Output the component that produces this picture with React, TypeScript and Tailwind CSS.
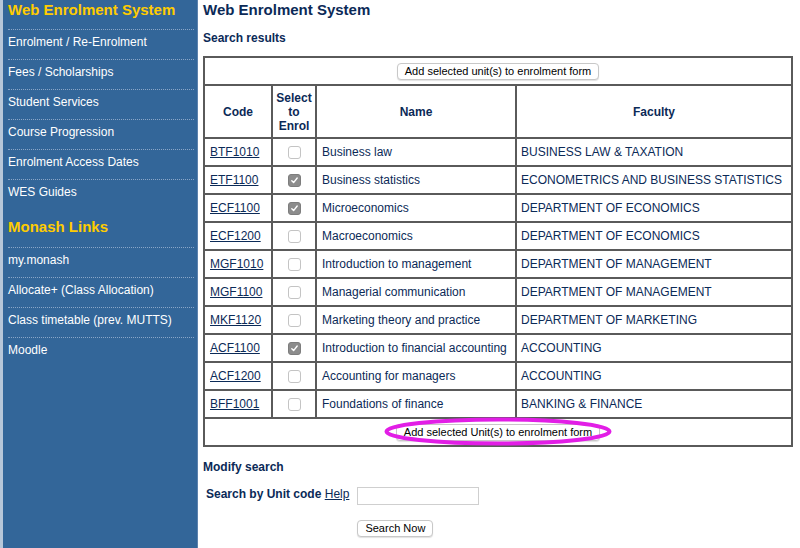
import React from "react";

const navy = "text-[#0b2a57]";

const rows: { code: string; checked: boolean; name: string; faculty: string }[] = [
  { code: "BTF1010", checked: false, name: "Business law", faculty: "BUSINESS LAW & TAXATION" },
  { code: "ETF1100", checked: true, name: "Business statistics", faculty: "ECONOMETRICS AND BUSINESS STATISTICS" },
  { code: "ECF1100", checked: true, name: "Microeconomics", faculty: "DEPARTMENT OF ECONOMICS" },
  { code: "ECF1200", checked: false, name: "Macroeconomics", faculty: "DEPARTMENT OF ECONOMICS" },
  { code: "MGF1010", checked: false, name: "Introduction to management", faculty: "DEPARTMENT OF MANAGEMENT" },
  { code: "MGF1100", checked: false, name: "Managerial communication", faculty: "DEPARTMENT OF MANAGEMENT" },
  { code: "MKF1120", checked: false, name: "Marketing theory and practice", faculty: "DEPARTMENT OF MARKETING" },
  { code: "ACF1100", checked: true, name: "Introduction to financial accounting", faculty: "ACCOUNTING" },
  { code: "ACF1200", checked: false, name: "Accounting for managers", faculty: "ACCOUNTING" },
  { code: "BFF1001", checked: false, name: "Foundations of finance", faculty: "BANKING & FINANCE" },
];

function Checkbox({ checked }: { checked: boolean }) {
  if (checked) {
    return (
      <span className="inline-flex h-[13px] w-[13px] items-center justify-center rounded-[3px] border border-[#7d7d7d] bg-[#8c8c8c] align-middle">
        <svg width="9" height="9" viewBox="0 0 9 9">
          <path d="M1.8 4.8 L3.6 6.6 L7.2 2" fill="none" stroke="#ffffff" strokeWidth="1.4" strokeLinecap="round" strokeLinejoin="round" />
        </svg>
      </span>
    );
  }
  return (
    <span className="inline-block h-[13px] w-[13px] rounded-[3px] border border-[#c4c4c4] bg-white align-middle" />
  );
}

function MacButton({ children }: { children: React.ReactNode }) {
  return (
    <span className="inline-flex h-[17px] items-center rounded-[4px] border border-[#c8c8c8] bg-white px-[7px] text-[11px] leading-none text-black shadow-[0_1px_1px_rgba(0,0,0,0.12)]">
      {children}
    </span>
  );
}

const sideItems1 = [
  "Enrolment / Re-Enrolment",
  "Fees / Scholarships",
  "Student Services",
  "Course Progression",
  "Enrolment Access Dates",
  "WES Guides",
];
const sideItems2 = ["my.monash", "Allocate+ (Class Allocation)", "Class timetable (prev. MUTTS)", "Moodle"];

const cell = "border-2 border-[#5a5a5a]";

export default function App() {
  return (
    <div
      className="flex h-[548px] w-[800px] overflow-hidden bg-white"
      style={{ fontFamily: '"Liberation Sans", Arial, Helvetica, sans-serif' }}
    >
      {/* Sidebar */}
      <div className="h-full w-[3px] bg-[#b7c7d9]" />
      <aside className="h-full w-[195px] border-r border-[#5d82ad] bg-[#336699] pl-[5px] pr-[3px]">
        <div className="pb-[9px] text-[15px] font-bold leading-[20px] text-[#ffcc00]">Web Enrolment System</div>
        {sideItems1.map((t) => (
          <div
            key={t}
            className="border-t border-dotted border-[#8aa6c8] pb-[9px] pt-[4px] text-[12px] leading-[16px] text-white"
          >
            {t}
          </div>
        ))}
        <div className="mt-[8px] pb-[10px] text-[15px] font-bold leading-[20px] text-[#ffcc00]">Monash Links</div>
        {sideItems2.map((t) => (
          <div
            key={t}
            className="border-t border-dotted border-[#8aa6c8] pb-[9px] pt-[4px] text-[12px] leading-[16px] text-white"
          >
            {t}
          </div>
        ))}
      </aside>

      {/* Main */}
      <main className={`ml-[5px] flex-1 ${navy}`}>
        <h1 className="text-[15px] font-bold leading-[20px]">Web Enrolment System</h1>
        <h2 className="mt-[10px] text-[12px] font-bold leading-[16px]">Search results</h2>

        <table className="mt-[10px] w-[588px] table-fixed border-collapse text-[12px]">
          <colgroup>
            <col className="w-[68px]" />
            <col className="w-[44px]" />
            <col className="w-[200px]" />
            <col className="w-[276px]" />
          </colgroup>
          <tbody>
            <tr className="h-[28px]">
              <td colSpan={4} className={`${cell} text-center`}>
                <MacButton>Add selected unit(s) to enrolment form</MacButton>
              </td>
            </tr>
            <tr className="h-[53px] font-bold leading-[14px]">
              <td className={`${cell} text-center`}>Code</td>
              <td className={`${cell} text-center`}>
                Select
                <br />
                to
                <br />
                Enrol
              </td>
              <td className={`${cell} text-center`}>Name</td>
              <td className={`${cell} text-center`}>Faculty</td>
            </tr>
            {rows.map((r) => (
              <tr key={r.code} className="h-[28px] leading-[16px]">
                <td className={`${cell} px-[5px]`}>
                  <span className="underline">{r.code}</span>
                </td>
                <td className={`${cell} text-center`}>
                  <Checkbox checked={r.checked} />
                </td>
                <td className={`${cell} whitespace-nowrap px-[5px]`}>{r.name}</td>
                <td className={`${cell} whitespace-nowrap px-[4px]`}>{r.faculty}</td>
              </tr>
            ))}
            <tr className="h-[28px]">
              <td colSpan={4} className={`${cell} text-center`}>
                <span className="relative inline-block">
                  <MacButton>Add selected Unit(s) to enrolment form</MacButton>
                  <svg
                    className="pointer-events-none absolute left-1/2 top-1/2 -translate-x-1/2 -translate-y-1/2"
                    width="229"
                    height="30"
                    viewBox="0 0 229 30"
                  >
                    <ellipse cx="114.5" cy="14.5" rx="111.5" ry="12" fill="none" stroke="#e21ee6" strokeWidth="4" />
                  </svg>
                </span>
              </td>
            </tr>
          </tbody>
        </table>

        <h2 className="mt-[12px] text-[12px] font-bold leading-[16px]">Modify search</h2>
        <div className="mt-[11px] flex gap-[8px] pl-[3px]">
          <div className="whitespace-nowrap text-[12px] leading-[16px]">
            <span className="font-bold">Search by Unit code</span>{" "}
            <span className="underline">Help</span>
          </div>
          <div className="flex flex-col items-start">
            <input
              type="text"
              className="mt-[1px] h-[18px] w-[122px] border border-[#cfcfcf] bg-white outline-none"
            />
            <span className="mt-[10px]">
              <MacButton>Search Now</MacButton>
            </span>
          </div>
        </div>
      </main>
    </div>
  );
}
